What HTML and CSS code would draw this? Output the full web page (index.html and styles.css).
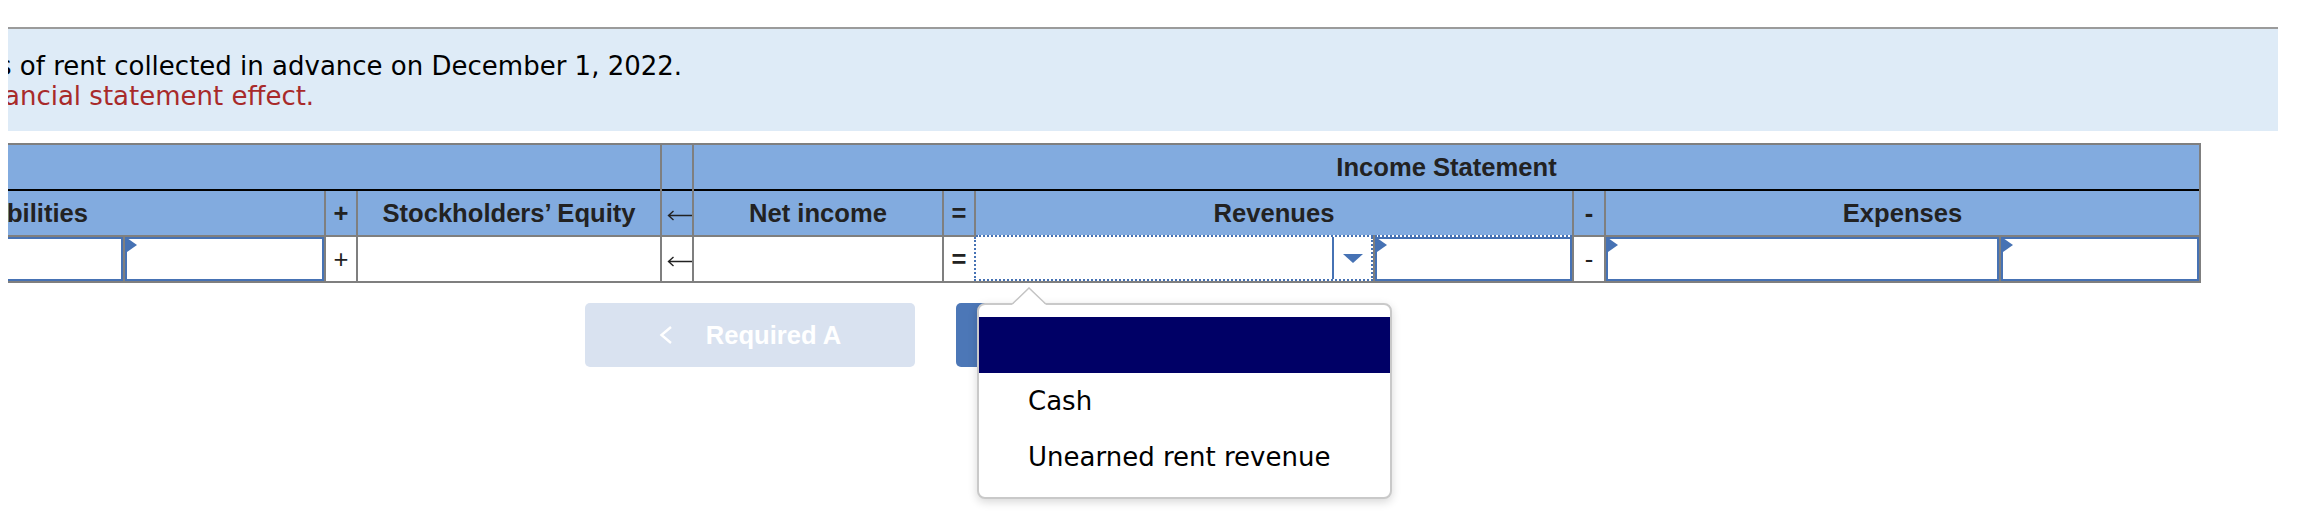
FILE: index.html
```html
<!DOCTYPE html>
<html lang="en">
<head>
<meta charset="utf-8">
<title>Financial statement effect</title>
<link rel="stylesheet" href="styles.css">
</head>
<body>
<div class="page">
  <div class="prompt">
    <p class="prompt-line prompt-q">s of rent collected in advance on December 1, 2022.</p>
    <p class="prompt-line prompt-instr">ancial statement effect.</p>
  </div>

  <div class="work">
    <div class="sheet-clip">
      <div class="sheet">
        <!-- header row 1 -->
        <div class="cell hd1 span-bs"></div>
        <div class="cell hd1"></div>
        <div class="cell hd1 span-is">Income Statement</div>

        <!-- header row 2 -->
        <div class="cell span-liab">Liabilities</div>
        <div class="cell">+</div>
        <div class="cell">Stockholders’ Equity</div>
        <div class="cell arrow" title="←">
          <svg class="larr" width="25" height="11" viewBox="0 0 25 11"><path d="M25 5.5H1.5M6.5 1L1.5 5.5L6.5 10" fill="none" stroke="#222222" stroke-width="1.4"/></svg>
        </div>
        <div class="cell">Net income</div>
        <div class="cell">=</div>
        <div class="cell span-rev">Revenues</div>
        <div class="cell">-</div>
        <div class="cell span-exp">Expenses</div>

        <!-- data row -->
        <div class="cell dc dc-field"><div class="field"></div></div>
        <div class="cell dc dc-field"><div class="field"><span class="flag"></span></div></div>
        <div class="cell dc dc-sym">+</div>
        <div class="cell dc"></div>
        <div class="cell dc arrow" title="←">
          <svg class="larr" width="25" height="11" viewBox="0 0 25 11"><path d="M25 5.5H1.5M6.5 1L1.5 5.5L6.5 10" fill="none" stroke="#222222" stroke-width="1.4"/></svg>
        </div>
        <div class="cell dc"></div>
        <div class="cell dc">=</div>
        <div class="cell dc dc-focus dc-select">
          <div class="select">
            <div class="select-btn">
              <svg class="caret" width="20" height="9" viewBox="0 0 20 9"><polygon points="0,0 20,0 10,9" fill="#4672b4"/></svg>
            </div>
          </div>
          <div class="menu">
            <svg class="menu-tip" width="34" height="18" viewBox="0 0 34 18">
              <polygon points="0,18 17,1 34,18" fill="#ffffff"/>
              <polyline points="0.5,16.8 17,1 33.5,16.8" fill="none" stroke="#c4c4c4" stroke-width="1.5"/>
            </svg>
            <div class="menu-opt is-active"></div>
            <div class="menu-opt">Cash</div>
            <div class="menu-opt">Unearned rent revenue</div>
          </div>
        </div>
        <div class="cell dc dc-focus dc-field"><div class="field"><span class="flag"></span></div></div>
        <div class="cell dc dc-sym">-</div>
        <div class="cell dc dc-field"><div class="field"><span class="flag"></span></div></div>
        <div class="cell dc dc-field"><div class="field"><span class="flag"></span></div></div>
      </div>
    </div>

    <div class="nav">
      <div class="btn btn-prev">
        <svg width="14" height="18" viewBox="0 0 14 18"><polyline points="12,1 2.5,9 12,17" fill="none" stroke="#ffffff" stroke-width="2.4"/></svg>
        <span>Required A</span>
      </div>
      <div class="btn btn-next">
        <span>Required B</span>
        <svg width="14" height="18" viewBox="0 0 14 18"><polyline points="2,1 11.5,9 2,17" fill="none" stroke="#ffffff" stroke-width="2.4"/></svg>
      </div>
    </div>
  </div>
</div>
</body>
</html>
```

FILE: styles.css
```css
* {
  box-sizing: border-box;
}

html,
body {
  margin: 0;
  padding: 0;
  background: #ffffff;
}

body {
  width: 2307px;
  height: 524px;
  overflow: hidden;
  font-family: "DejaVu Sans", Verdana, sans-serif;
  color: #000000;
}

.page {
  width: 2278px;
  padding: 27px 0 0 8px;
}

/* question panel */
.prompt {
  border-top: 2px solid #9b9b9b;
  background: #deebf7;
  padding: 22px 0 20px;
  overflow: hidden;
}

.prompt-line {
  margin: 0;
  font-size: 26px;
  line-height: 30px;
  white-space: nowrap;
}

.prompt-q {
  margin-left: -10px;
  color: #000000;
}

.prompt-instr {
  margin-left: -4px;
  color: #a82a2a;
}

/* worksheet */
.work {
  position: relative;
  margin-top: 12px;
}

.sheet-clip {
  overflow-x: clip;
  overflow-y: visible;
}

.sheet {
  display: grid;
  width: max-content;
  margin-left: -274px;
  grid-template-columns: 389px 199px 30px 302px 30px 248px 30px 397px 197px 30px 393px 198px;
  grid-template-rows: 46px 44px 46px;
  column-gap: 2px;
  background: #7f7f7f;
  border-top: 2px solid #7f7f7f;
  border-bottom: 2px solid #7f7f7f;
  border-right: 2px solid #7f7f7f;
  font-family: "Liberation Sans", Arial, sans-serif;
  font-size: 25.6px;
  font-weight: bold;
  color: #222222;
}

.cell {
  display: flex;
  align-items: center;
  justify-content: center;
  background: #82abdf;
  white-space: nowrap;
}

.hd1 {
  border-bottom: 2px solid #000000;
}

.span-bs {
  grid-column: 1 / 5;
}

.span-is {
  grid-column: 6 / 13;
}

.span-liab {
  grid-column: 1 / 3;
}

.span-rev {
  grid-column: 8 / 10;
}

.span-exp {
  grid-column: 11 / 13;
}

.arrow {
  justify-content: flex-end;
}

.larr {
  display: block;
  margin-top: 4px;
}

/* data row */
.dc {
  background: #ffffff;
  border-top: 2px solid #7f7f7f;
}

.dc-sym {
  font-weight: normal;
}

.dc-focus {
  border-top: 2px dotted #4672b4;
}

.dc-field {
  align-items: stretch;
  justify-content: stretch;
}

.field {
  position: relative;
  flex: 1;
  border: 2px solid #4672b4;
  background: #ffffff;
}

.flag {
  position: absolute;
  left: 0;
  top: -1px;
  width: 0;
  height: 0;
  border-top: 7px solid transparent;
  border-bottom: 7px solid transparent;
  border-left: 10px solid #4672b4;
}

.dc-select {
  position: relative;
  align-items: stretch;
  justify-content: stretch;
}

.select {
  flex: 1;
  display: flex;
  justify-content: flex-end;
  margin-left: -2px;
  background: #ffffff;
  border: 2px dotted #4672b4;
  border-top: 0;
}

.select-btn {
  width: 39px;
  display: flex;
  align-items: center;
  justify-content: center;
  border-left: 2px solid #4672b4;
}

.caret {
  display: block;
}

/* dropdown menu */
.menu {
  position: absolute;
  left: 1px;
  top: 66px;
  z-index: 5;
  width: 415px;
  height: 196px;
  padding: 12px 0 11px;
  background: #ffffff;
  border: 2px solid #c9c9c9;
  border-radius: 8px;
  box-shadow: 0 3px 10px rgba(0, 0, 0, 0.16);
  font-family: "DejaVu Sans", Verdana, sans-serif;
  font-size: 26px;
  font-weight: normal;
  color: #000000;
}

.menu-tip {
  position: absolute;
  left: 33px;
  top: -18px;
  display: block;
}

.menu-opt {
  height: 56px;
  line-height: 56px;
  padding-left: 49px;
  white-space: nowrap;
}

.menu-opt.is-active {
  background: #000066;
}

/* navigation buttons */
.nav {
  display: flex;
  gap: 41px;
  margin: 20px 0 0 577px;
}

.btn {
  width: 330px;
  height: 64px;
  border-radius: 5px;
  display: flex;
  align-items: center;
  justify-content: center;
  gap: 33px;
  font-family: "Liberation Sans", Arial, sans-serif;
  font-size: 25.6px;
  font-weight: bold;
  color: #ffffff;
}

.btn svg {
  display: block;
}

.btn-prev {
  background: #d9e2f0;
}

.btn-next {
  background: #4c77b7;
}
```
